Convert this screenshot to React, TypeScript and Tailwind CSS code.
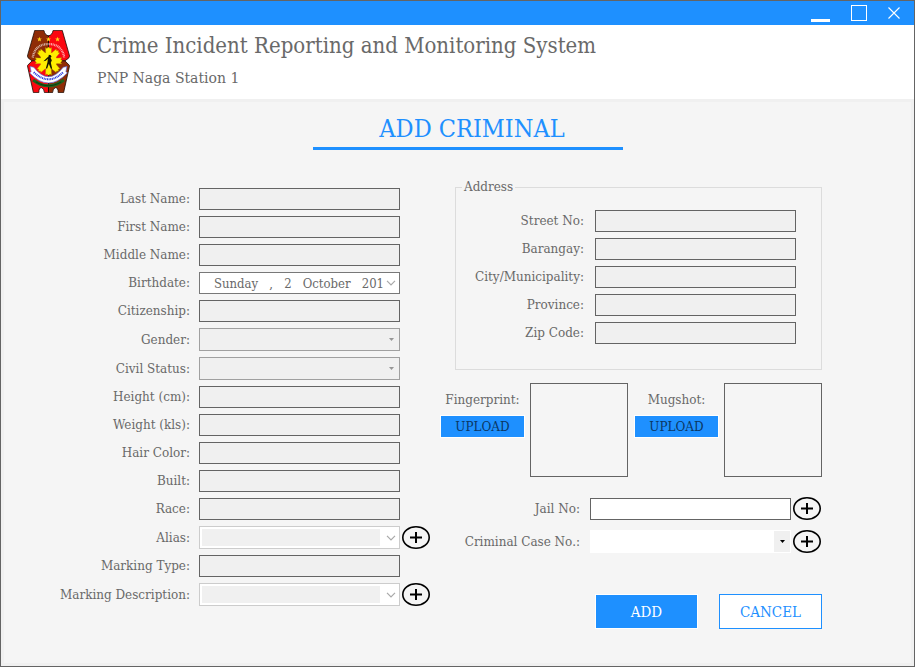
import type { ReactNode } from "react";

const box =
  "h-[22px] w-full min-w-0 border border-[#646464] px-1 text-xs outline-none";

function PoliceLogo() {
  return (
    <svg viewBox="0 0 128 188" className="h-[63px] w-[43px] shrink-0" role="img" aria-label="Police seal">
      <defs>
        <clipPath id="shield">
          <path d="M23 1H50Q54 17 64 17Q74 17 78 1H105L127 78L124 84L113 92L127 106L109 187H93Q93 172 85 172Q77 174 76 187H52Q51 174 43 172Q35 172 35 187H19L1 106L15 92L4 84L1 78Z" />
        </clipPath>
        <path id="motto" d="M17 82Q24 42 64 42Q104 42 111 82" />
      </defs>
      <g clipPath="url(#shield)">
        <path fill="#8f2c06" d="M0 0H64V92H0zM64 92H128V188H64z" />
        <path fill="#fb0710" d="M64 0H128V92H64zM0 92H64V188H0z" />
        <path stroke="#160a00" strokeWidth="3" d="M64 0V188M0 92H128" />
        <path fill="none" stroke="#1f641c" strokeWidth="9" d="M18 149Q64 184 110 149" />
        <path fill="none" stroke="#0c3d12" strokeWidth="3" d="M26 155Q64 178 102 155" />
      </g>
      <path
        fill="none"
        stroke="#211006"
        strokeWidth="2.5"
        d="M23 1H50Q54 17 64 17Q74 17 78 1H105L127 78L124 84L113 92L127 106L109 187H93Q93 172 85 172Q77 174 76 187H52Q51 174 43 172Q35 172 35 187H19L1 106L15 92L4 84L1 78Z"
      />
      <use href="#motto" fill="none" stroke="#fff" strokeWidth="7" strokeDasharray="3 2" opacity=".65" />
      <path
        fill="#ffd21a"
        d="M37 20l2 5h5l-4 4 2 5-5-3-5 3 2-5-4-4h5zM64 20l2 5h5l-4 4 2 5-5-3-5 3 2-5-4-4h5zM91 20l2 5h5l-4 4 2 5-5-3-5 3 2-5-4-4h5z"
      />
      <g fill="#ffee00" stroke="#a98500" strokeWidth="1">
        <path d="M55 52l4 3 5-4 5 4 4-3-1 24H56zM55 134l4-3 5 4 5-4 4 3-1-24H56zM24 83l4 4-5 5 5 5-4 4 24-1V84zM104 83l-4 4 5 5-5 5 4 4-24-1V84z" />
        <path d="M30 68l5-1-1-6 6 1 1-5 18 15-14 14zM98 68l-5-1 1-6-6 1-1-5-18 15 14 14zM30 116l5 1-1 6 6-1 1 5 18-15-14-14zM98 116l-5 1 1 6-6-1-1 5-18-15 14-14z" />
        <circle cx="64" cy="92" r="25" stroke="none" />
      </g>
      <path fill="#161600" d="M65 74l6 1 2 5-3 3 4 7-3 8 4 18h-4l-6-15-5 14h-4l5-19 1-10-6 6-7 1 9-9 6-5z" />
      <path fill="#fff" stroke="#5a68dc" strokeWidth="2" d="M9 109L20 111Q64 168 108 111L119 109L116 124L120 128Q64 188 8 128L12 124Z" />
      <path fill="none" stroke="#2435dc" strokeWidth="6" strokeDasharray="3 2" d="M20 126Q64 168 108 126" />
    </svg>
  );
}

function PlusButton({ label }: { label: string }) {
  return (
    <button type="button" aria-label={label} className="block h-[23px] w-7 shrink-0">
      <svg viewBox="0 0 28 23" className="block h-[23px] w-7" fill="none" stroke="#000">
        <ellipse cx="14" cy="11.5" rx="13.2" ry="10.7" strokeWidth="1.6" />
        <path d="M8 11.5H20M14 6V17" strokeWidth="2" />
      </svg>
    </button>
  );
}

function Chevron() {
  return (
    <svg viewBox="0 0 10 6" className="pointer-events-none absolute top-1/2 right-1 h-[6px] w-[10px] -translate-y-1/2" fill="none" stroke="#a9a9a9">
      <path d="M1 .8L5 4.8L9 .8" strokeWidth="1.2" />
    </svg>
  );
}

function Row({ label, id, children, extra }: { label: string; id: string; children: ReactNode; extra?: ReactNode }) {
  return (
    <div className="flex items-center gap-[2px]">
      <div className="flex min-w-0 flex-1 items-center gap-[9px]">
        <label htmlFor={id} className="w-[132px] shrink-0 text-right whitespace-nowrap">
          {label}
        </label>
        <div className="relative min-w-0 flex-1">{children}</div>
      </div>
      <div className="w-7 shrink-0">{extra}</div>
    </div>
  );
}

function TextRow({ label, id }: { label: string; id: string }) {
  return (
    <Row label={label} id={id}>
      <input id={id} type="text" className={`${box} block bg-[#f0f0f0]`} />
    </Row>
  );
}

function DisabledSelectRow({ label, id }: { label: string; id: string }) {
  return (
    <Row label={label} id={id}>
      <select id={id} className="block h-[23px] w-full appearance-none border border-[#a0a0a0] bg-[#f0f0f0] outline-none" />
      <svg viewBox="0 0 5 3" className="pointer-events-none absolute top-[10px] right-[6px] h-[3px] w-[5px]" fill="#969696">
        <path d="M0 0H5L2.5 3z" />
      </svg>
    </Row>
  );
}

function ListSelectRow({ label, id }: { label: string; id: string }) {
  return (
    <Row label={label} id={id} extra={<PlusButton label={`Add ${label}`} />}>
      <div className="h-[23px] border border-[#cccccc] bg-white py-[2px] pr-[19px] pl-[2px]">
        <select id={id} className="block h-[17px] w-full appearance-none bg-[#f0f0f0] outline-none" />
      </div>
      <Chevron />
    </Row>
  );
}

function AddressRow({ label, id }: { label: string; id: string }) {
  return (
    <div className="flex items-center gap-[11px]">
      <label htmlFor={id} className="w-28 shrink-0 text-right whitespace-nowrap">
        {label}
      </label>
      <input id={id} type="text" className={`${box} flex-1 bg-[#f0f0f0]`} />
    </div>
  );
}

function UploadBlock({ label }: { label: string }) {
  return (
    <div className="flex gap-[5px]">
      <div className="flex w-[85px] flex-col items-center gap-[6px] pt-2">
        <span className="leading-[18px]">{label}</span>
        <button type="button" aria-label={`Upload ${label}`} className="h-[23px] w-full border border-white bg-[#1e90ff] text-xs text-[#0b3763]">
          UPLOAD
        </button>
      </div>
      <div className="h-[94px] w-[98px] border border-[#646464]" />
    </div>
  );
}

export default function App() {
  return (
    <div className="flex min-h-screen flex-col border border-[#646464] bg-[#f5f5f5] font-['DejaVu_Serif',serif] text-xs leading-[18px] text-[#696969]">
      <div className="flex h-6 items-center justify-end gap-[21px] bg-[#1e90ff] pr-[14px]">
        <button type="button" aria-label="Minimize" className="flex h-[18px] w-[19px] items-end">
          <span className="h-[3px] w-full bg-white" />
        </button>
        <button type="button" aria-label="Maximize" className="h-4 w-4 border border-white" />
        <button type="button" aria-label="Close" className="h-3 w-3">
          <svg viewBox="0 0 12 12" className="block h-3 w-3" stroke="#fff" strokeWidth="1.1">
            <path d="M.5 .5L11.5 11.5M11.5 .5L.5 11.5" />
          </svg>
        </button>
      </div>

      <header className="flex h-[74px] items-start gap-[27px] bg-white pt-[5px] pl-[26px]">
        <PoliceLogo />
        <div className="flex flex-col gap-1">
          <h1 className="font-['DejaVu_Serif_Condensed','DejaVu_Serif',serif] text-[22px] leading-8">
            Crime Incident Reporting and Monitoring System
          </h1>
          <p className="text-sm leading-6">PNP Naga Station 1</p>
        </div>
      </header>

      <main className="flex-1 border-[3px] border-[#f0f0f0] pr-[89px] pl-[54px]">
        <div className="flex justify-center pl-14">
          <h2 className="mb-[38px] w-[310px] border-b-[3px] border-[#1e90ff] pt-[10px] pb-px pl-2 text-center font-['DejaVu_Serif_Condensed','DejaVu_Serif',serif] text-[25px] leading-[34px] text-[#1e90ff]">
            ADD CRIMINAL
          </h2>
        </div>

        <form className="grid grid-cols-[372fr_382fr] gap-[10px]">
          <div className="flex flex-col gap-[6px]">
            <TextRow label="Last Name:" id="last" />
            <TextRow label="First Name:" id="first" />
            <TextRow label="Middle Name:" id="middle" />
            <Row label="Birthdate:" id="birth">
              <input
                id="birth"
                type="text"
                defaultValue={"Sunday\u00a0\u00a0\u00a0,\u00a0\u00a0\u00a02\u00a0\u00a0\u00a0October\u00a0\u00a0\u00a0201"}
                className="block h-[22px] w-full border border-[#787878] bg-white pr-[14px] pl-[14px] font-['DejaVu_Serif_Condensed','DejaVu_Serif',serif] text-[13px] outline-none"
              />
              <Chevron />
            </Row>
            <TextRow label="Citizenship:" id="citizenship" />
            <DisabledSelectRow label="Gender:" id="gender" />
            <DisabledSelectRow label="Civil Status:" id="civil" />
            <TextRow label="Height (cm):" id="height" />
            <TextRow label="Weight (kls):" id="weight" />
            <TextRow label="Hair Color:" id="hair" />
            <TextRow label="Built:" id="built" />
            <TextRow label="Race:" id="race" />
            <ListSelectRow label="Alias:" id="alias" />
            <TextRow label="Marking Type:" id="marking" />
            <ListSelectRow label="Marking Description:" id="description" />
          </div>

          <div className="flex flex-col">
            <fieldset className="-mt-[10px] ml-[15px] flex h-[192px] flex-col border border-[#dcdcdc] pr-[25px] pl-4">
              <legend className="-ml-[10px] px-[2px]">Address</legend>
              <div className="flex flex-col gap-[6px] pt-[14px]">
                <AddressRow label="Street No:" id="street" />
                <AddressRow label="Barangay:" id="barangay" />
                <AddressRow label="City/Municipality:" id="city" />
                <AddressRow label="Province:" id="province" />
                <AddressRow label="Zip Code:" id="zip" />
              </div>
            </fieldset>

            <div className="mt-[13px] flex justify-between">
              <UploadBlock label="Fingerprint:" />
              <UploadBlock label="Mugshot:" />
            </div>

            <div className="mt-5 flex flex-col gap-[10px] pr-px">
              <div className="flex items-center gap-[2px]">
                <label htmlFor="jail" className="w-[148px] shrink-0 pr-2 text-right">
                  Jail No:
                </label>
                <input id="jail" type="text" className={`${box} flex-1 bg-white`} />
                <PlusButton label="Add jail number" />
              </div>
              <div className="flex items-center gap-[2px]">
                <label htmlFor="case" className="w-[148px] shrink-0 pr-2 text-right whitespace-nowrap">
                  Criminal Case No.:
                </label>
                <div className="relative min-w-0 flex-1">
                  <select id="case" className="block h-[23px] w-full appearance-none bg-white outline-none" />
                  <span className="pointer-events-none absolute inset-y-px right-px flex w-4 items-center justify-center bg-[#f0f0f0]">
                    <svg viewBox="0 0 5 3" className="h-[3px] w-[5px]" fill="#000">
                      <path d="M0 0H5L2.5 3z" />
                    </svg>
                  </span>
                </div>
                <PlusButton label="Add criminal case number" />
              </div>
            </div>

            <div className="mt-[41px] flex justify-end gap-[21px] font-['DejaVu_Serif_Condensed','DejaVu_Serif',serif] text-[15px]">
              <button type="submit" className="h-[35px] w-[103px] border border-white bg-[#1e90ff] text-white">
                ADD
              </button>
              <button type="button" className="h-[35px] w-[103px] border border-[#1e90ff] bg-white text-[#1e90ff]">
                CANCEL
              </button>
            </div>
          </div>
        </form>
      </main>
    </div>
  );
}
